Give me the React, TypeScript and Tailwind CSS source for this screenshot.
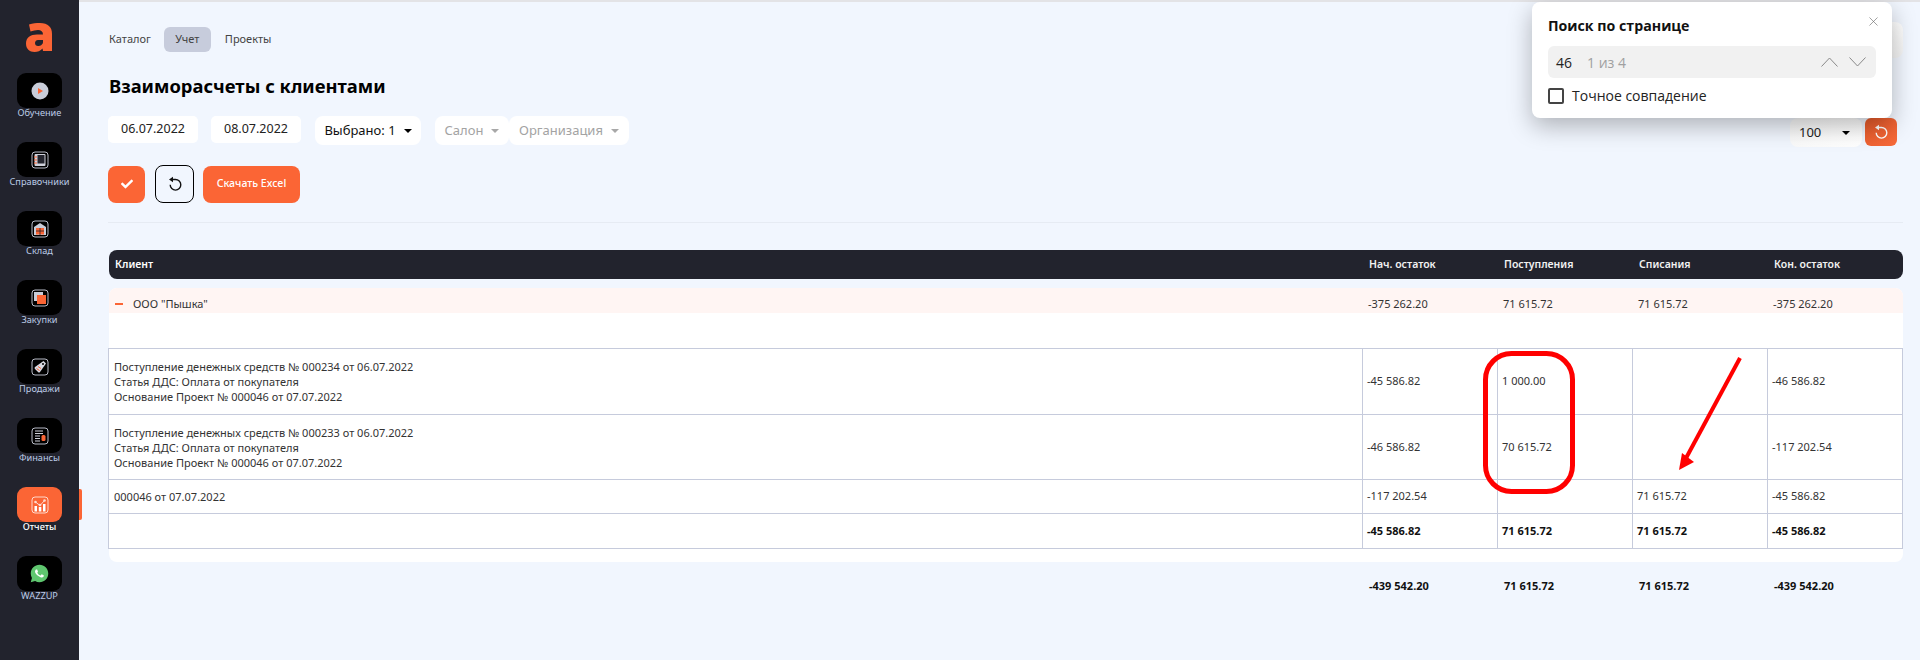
import React from "react";
import { X } from "lucide-react";
import { FaCheck } from "react-icons/fa";
import { RiWhatsappFill } from "react-icons/ri";

const ORANGE = "#fb6535";

function Frame({ children }: { children: React.ReactNode }) {
  return (
    <svg width="18" height="18" viewBox="0 0 18 18" fill="none">
      <rect x="1" y="1" width="16" height="16" rx="3" stroke="#b9bcc8" strokeWidth="1" />
      {children}
    </svg>
  );
}

const icons: Record<string, React.ReactNode> = {
  play: (
    <svg width="18" height="18" viewBox="0 0 18 18">
      <circle cx="9" cy="9" r="8.5" fill="#c9cdd9" />
      <path d="M7 6 L12 9 L7 12 Z" fill={ORANGE} />
    </svg>
  ),
  book: (
    <Frame>
      <rect x="3.5" y="3" width="11" height="12" rx="1" fill="#d0d2db" />
      <rect x="6.5" y="4" width="7" height="8.5" fill="#24252e" />
      <path d="M3 6h3M3 9h3M3 12h3" stroke={ORANGE} strokeWidth="1.2" />
    </Frame>
  ),
  store: (
    <Frame>
      <path d="M3 7 L9 3 L15 7 V15 H3 Z" fill="#c9cdd9" />
      <rect x="5" y="8" width="8" height="6.5" fill={ORANGE} />
      <path d="M9 8v7M5 11h8" stroke="#24252e" strokeWidth="0.8" />
    </Frame>
  ),
  cart: (
    <Frame>
      <rect x="3" y="3" width="9" height="9" fill="#c9cdd9" />
      <rect x="6" y="6" width="9" height="9" fill={ORANGE} />
    </Frame>
  ),
  tag: (
    <Frame>
      <path d="M12.500 3 L15 5.500 L9 14 Q8 15 7 14 L4 11 Q3 10 4 9 Z" fill="#d8dae2" />
      <circle cx="12" cy="6" r="1" fill="#000" />
      <path d="M5.500 10.500l3 2M7 8.500l3 2" stroke={ORANGE} strokeWidth="1" />
    </Frame>
  ),
  doc: (
    <Frame>
      <path d="M4 4h8M4 6.500h8M4 9h5M4 11.500h5M4 14h5" stroke="#d0d2db" strokeWidth="1.1" />
      <rect x="10.500" y="8" width="4" height="6" rx="1.500" fill={ORANGE} />
    </Frame>
  ),
  chart: (
    <svg width="18" height="18" viewBox="0 0 18 18" fill="none">
      <rect x="1" y="1" width="16" height="16" rx="3" stroke="#ffd9cc" strokeWidth="1" />
      <rect x="3.500" y="10" width="2.500" height="5.500" fill="#fff" />
      <rect x="7.800" y="11" width="2.500" height="4.500" fill="#fff" />
      <rect x="12" y="8" width="2.500" height="7.500" fill="#fff" />
      <path d="M4.500 6 L9 9.500 L13.500 4.500" stroke="#ffd9cc" strokeWidth="1" />
      <circle cx="4.500" cy="6" r="1.300" fill="#ffd9cc" />
      <circle cx="9" cy="9" r="1.300" fill="#ffd9cc" />
      <circle cx="13.500" cy="4.500" r="1.300" fill="#ffd9cc" />
    </svg>
  ),
  whatsapp: (
    <div className="relative flex items-center justify-center">
      <div className="absolute h-[13px] w-[13px] rounded-full bg-white" />
      <RiWhatsappFill className="relative text-[#5fc66f]" size={21} />
    </div>
  ),
};

const menu = [
  { label: "Обучение", icon: "play" },
  { label: "Справочники", icon: "book" },
  { label: "Склад", icon: "store" },
  { label: "Закупки", icon: "cart" },
  { label: "Продажи", icon: "tag" },
  { label: "Финансы", icon: "doc" },
  { label: "Отчеты", icon: "chart", active: true },
  { label: "WAZZUP", icon: "whatsapp" },
];

function Caret({ color = "#000" }: { color?: string }) {
  return (
    <svg width="8" height="4" viewBox="0 0 8 4" className="shrink-0">
      <path d="M0 0 H8 L4 4 Z" fill={color} />
    </svg>
  );
}

function UndoIcon() {
  return (
    <svg width="16" height="16" viewBox="0 0 16 16" fill="none">
      <path d="M5 3.500 H8.500 A5.300 5.300 0 1 1 3.200 8.800" stroke="currentColor" strokeWidth="1.400" />
      <path d="M6 .8 L2 3.500 L6 6.200 Z" fill="currentColor" />
    </svg>
  );
}

function Sidebar() {
  return (
    <aside className="flex w-[79px] shrink-0 flex-col items-center bg-[#22232d] pt-[23px]">
      <svg width="27" height="29" viewBox="0 0 27 29" fillRule="evenodd" className="shrink-0">
        <path
          d="M3 1.500C7 .3 10 0 14 0c8 0 12 4 12 11v17h-9l-.5-2.500C14.500 28 11.500 29 8.500 29 3.500 29 0 26 0 20.500c0-6 4.500-9 11-9h6c0-3-2-4.500-5-4.500-2.500 0-5 .5-7.500 1.500ZM17 17h-5c-2 0-3 1.500-3 3 0 1.800 1.200 3 3 3 2.500 0 5-1.500 5-4Z"
          fill={ORANGE}
        />
      </svg>
      <div className="mt-[21px] flex flex-col">
        {menu.map((m) => (
          <div key={m.label} className="relative flex h-[69px] w-[79px] flex-col items-center">
            <div
              className={`flex h-[35px] w-[45px] items-center justify-center rounded-[9px] ${
                m.active ? "bg-[#fb6535]" : "bg-black"
              }`}
            >
              {icons[m.icon]}
            </div>
            <span
              className={`mt-[-2px] whitespace-nowrap text-[9.2px] leading-[14px] ${
                m.active ? "font-medium text-white" : "text-[#bccbe6]"
              }`}
            >
              {m.label}
            </span>
            {m.active && (
              <div className="absolute left-[79px] top-[2px] h-[31px] w-[3px] rounded-r-[2px] bg-[#fb6535]" />
            )}
          </div>
        ))}
      </div>
    </aside>
  );
}

function DateBox({ value }: { value: string }) {
  return (
    <div className="flex h-[27px] w-[90px] items-center justify-center rounded-[5px] bg-white text-[12.5px] text-[#222]">
      {value}
    </div>
  );
}

function Pill({ label, muted, className }: { label: string; muted?: boolean; className: string }) {
  return (
    <div
      className={`flex h-[29px] items-center justify-center gap-[8px] rounded-[8px] bg-white text-[13px] ${
        muted ? "text-[#a3a3a3]" : "text-[#111]"
      } ${className}`}
    >
      {label}
      <Caret color={muted ? "#a8a8a8" : "#000"} />
    </div>
  );
}

const COLS = "grid grid-cols-[1254px_135px_135px_135px_135px]";
const BODY_COLS = "grid grid-cols-[1255px_135px_135px_135px_135px]";

const rows = [
  {
    h: "h-[66px]",
    lines: [
      "Поступление денежных средств № 000234 от 06.07.2022",
      "Статья ДДС: Оплата от покупателя",
      "Основание Проект № 000046 от 07.07.2022",
    ],
    vals: ["-45 586.82", "1 000.00", "", "-46 586.82"],
  },
  {
    h: "h-[65px]",
    lines: [
      "Поступление денежных средств № 000233 от 06.07.2022",
      "Статья ДДС: Оплата от покупателя",
      "Основание Проект № 000046 от 07.07.2022",
    ],
    vals: ["-46 586.82", "70 615.72", "", "-117 202.54"],
  },
  {
    h: "h-[34px]",
    lines: ["000046 от 07.07.2022"],
    vals: ["-117 202.54", "", "71 615.72", "-45 586.82"],
  },
  {
    h: "h-[35px]",
    lines: [""],
    vals: ["-45 586.82", "71 615.72", "71 615.72", "-45 586.82"],
    bold: true,
  },
];

function Table() {
  return (
    <div className="relative">
      <div className={`${COLS} ml-px h-[29px] items-center rounded-[8px] bg-[#22232d] text-[10.5px] font-semibold text-[#f2f2f2]`}>
        <div className="pl-[6px] text-white">Клиент</div>
        {["Нач. остаток", "Поступления", "Списания", "Кон. остаток"].map((t) => (
          <div key={t} className="pl-[6px]">
            {t}
          </div>
        ))}
      </div>

      <div className="ml-px mt-[9px] rounded-[8px] bg-white pb-[13px]">
        <div className={`${COLS} h-[25px] items-start rounded-t-[8px] bg-[#fff5f3] pt-[8px] text-[11px] leading-[16px] text-[#333]`}>
          <div className="flex items-center pl-[6px]">
            <span className="h-[2px] w-[8px] bg-[#fb6535]" />
            <span className="ml-[10px]">ООО "Пышка"</span>
          </div>
          {["-375 262.20", "71 615.72", "71 615.72", "-375 262.20"].map((v, i) => (
            <div key={i} className="pl-[5px]">
              {v}
            </div>
          ))}
        </div>
        <div className="h-[35px]" />

        <div className="-ml-px border-t border-[#c6cbdc] text-[11px] text-[#333]">
          {rows.map((r, i) => (
            <div key={i} className={`${BODY_COLS} ${r.h} border-b border-[#c6cbdc] ${r.bold ? "font-bold text-[#111]" : ""}`}>
              <div className="flex flex-col justify-center border-x border-[#c6cbdc] pl-[5px] leading-[15px]">
                {r.lines.map((l, j) => (
                  <div key={j}>{l}</div>
                ))}
              </div>
              {r.vals.map((v, j) => (
                <div key={j} className="flex items-center border-r border-[#c6cbdc] pl-[4px]">
                  {v}
                </div>
              ))}
            </div>
          ))}
        </div>
      </div>

      <div className={`${COLS} ml-px mt-[16px] text-[11px] font-bold text-[#111]`}>
        <div />
        {["-439 542.20", "71 615.72", "71 615.72", "-439 542.20"].map((v, i) => (
          <div key={i} className="pl-[6px]">
            {v}
          </div>
        ))}
      </div>

      {/* red pen annotation drawn over the screenshot */}
      <svg className="absolute left-[1370px] top-[95px]" width="310" height="160" viewBox="0 0 310 160" fill="none">
        <rect x="7.500" y="8.500" width="87" height="138" rx="26" stroke="#ff0000" strokeWidth="5" />
        <path d="M262 13 L207 115" stroke="#ff0000" strokeWidth="4" />
        <path d="M201 125 L204 108 L216 117 Z" fill="#ff0000" />
      </svg>
    </div>
  );
}

function SearchPopup() {
  return (
    <div className="absolute right-[28px] top-[2px] z-10 h-[116px] w-[360px] rounded-[8px] bg-white px-[16px] pt-[13px] font-['Open_Sans',sans-serif] shadow-[0_8px_24px_rgba(0,0,0,0.28)]">
      <div className="text-[14.2px] font-bold leading-[22px] text-[#111]">Поиск по странице</div>
      <X className="absolute right-[11px] top-[12px] text-[#666]" size={15} strokeWidth={1} />
      <div className="mt-[9px] flex h-[32px] items-center rounded-[6px] bg-[#f1f1f1] pl-[8px] pr-[10px] text-[14px]">
        <span className="text-[#222]">46</span>
        <span className="ml-[15px] text-[#a0a0a0]">1 из 4</span>
        <div className="ml-auto flex items-center gap-[11px]">
          <svg width="17" height="10" viewBox="0 0 17 10" fill="none">
            <path d="M.5 9.500 L8.500 1 L16.500 9.500" stroke="#888" />
          </svg>
          <svg width="17" height="10" viewBox="0 0 17 10" fill="none">
            <path d="M.5 .5 L8.500 9 L16.500 .5" stroke="#888" />
          </svg>
        </div>
      </div>
      <div className="mt-[10px] flex items-center">
        <span className="h-[16px] w-[16px] rounded-[2px] border-2 border-[#444]" />
        <span className="ml-[8px] text-[14px] leading-[16px] text-[#222]">Точное совпадение</span>
      </div>
    </div>
  );
}

export default function App() {
  return (
    <div className="relative flex h-[660px] overflow-hidden bg-[#f1f6fe] font-['Noto_Sans',sans-serif]">
      <Sidebar />
      <main className="min-w-0 flex-1 border-t-2 border-[#e3e3e6] pl-[29px] pr-[17px]">
        {/* tabs */}
        <div className="flex h-[56px] items-start justify-between pt-[20px]">
          <div className="ml-px mt-[5px] flex h-[25px] items-center text-[11px] text-[#444]">
            <span className="mr-[13px]">Каталог</span>
            <span className="flex h-[25px] w-[47px] items-center justify-center rounded-[6px] bg-[#c7ccdc]">Учет</span>
            <span className="ml-[14px]">Проекты</span>
          </div>
          <div className="h-[36px] w-[60px] rounded-[8px] bg-gradient-to-b from-white to-[#f4f4f4]" />
        </div>

        <h1 className="ml-px mt-[14px] text-[18.4px] font-bold leading-[28px] text-black">Взаиморасчеты с клиентами</h1>

        {/* filters */}
        <div className="mt-[16px] flex h-[29px] items-start justify-between">
          <div className="flex items-start">
            <DateBox value="06.07.2022" />
            <div className="ml-[13px]">
              <DateBox value="08.07.2022" />
            </div>
            <Pill label="Выбрано: 1" className="ml-[14px] w-[106px]" />
            <Pill label="Салон" muted className="ml-[14px] w-[74px]" />
            <Pill label="Организация" muted className="w-[120px]" />
          </div>
          <div className="mr-[6px] mt-[2px] flex items-start gap-[3px]">
            <div className="flex h-[29px] w-[72px] items-center justify-between rounded-[8px] bg-gradient-to-r from-[#fafafa] to-white pl-[9px] pr-[12px] text-[13px] text-[#222]">
              100
              <Caret />
            </div>
            <div className="flex h-[28px] w-[32px] items-center justify-center rounded-[6px] bg-gradient-to-br from-[#e65a2a] to-[#f76a3a] text-white">
              <UndoIcon />
            </div>
          </div>
        </div>

        {/* actions */}
        <div className="mt-[20px] flex items-center">
          <button className="flex h-[37px] w-[37px] items-center justify-center rounded-[8px] bg-[#fb6535] text-white">
            <FaCheck size={12} />
          </button>
          <button className="ml-[10px] flex h-[38px] w-[39px] items-center justify-center rounded-[8px] border border-black text-[#111]">
            <UndoIcon />
          </button>
          <button className="ml-[9px] flex h-[37px] w-[97px] items-center justify-center rounded-[8px] bg-[#fb6535] text-[10.5px] font-medium text-white">
            Скачать Excel
          </button>
        </div>

        <div className="mt-[19px] border-t border-[#e6ebf3]" />
        <div className="mt-[27px]">
          <Table />
        </div>
      </main>
      <SearchPopup />
    </div>
  );
}
